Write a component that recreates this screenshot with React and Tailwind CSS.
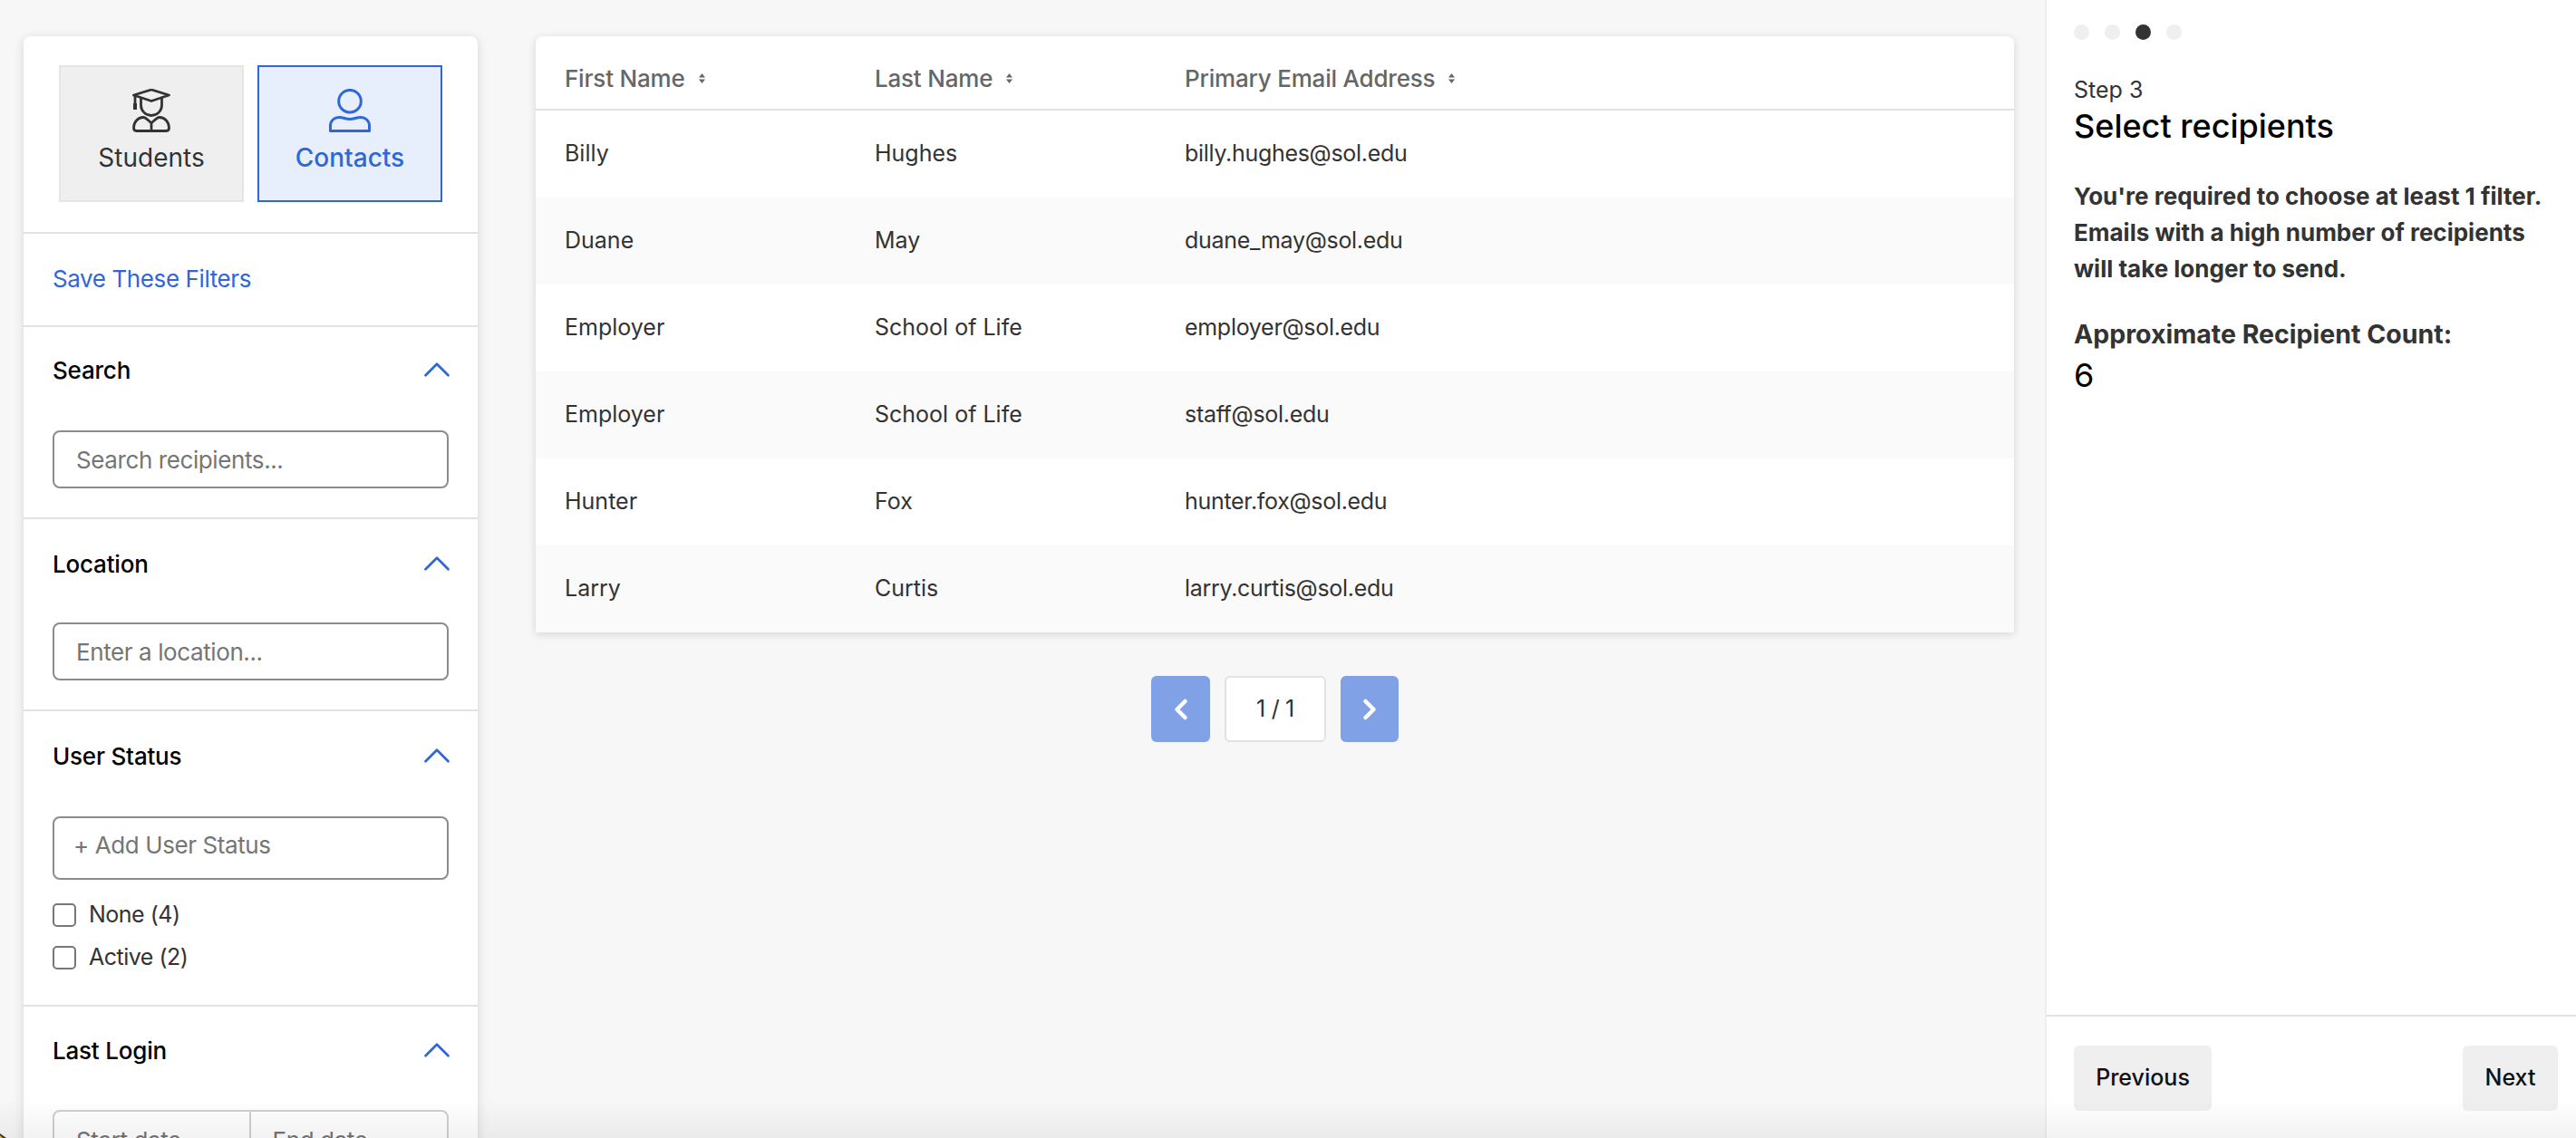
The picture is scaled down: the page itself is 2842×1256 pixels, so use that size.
import React from 'react';
import { ChevronUp, ChevronLeft, ChevronRight } from 'lucide-react';

const rows = [
    ['Billy', 'Hughes', 'billy.hughes@sol.edu'],
    ['Duane', 'May', 'duane_may@sol.edu'],
    ['Employer', 'School of Life', 'employer@sol.edu'],
    ['Employer', 'School of Life', 'staff@sol.edu'],
    ['Hunter', 'Fox', 'hunter.fox@sol.edu'],
    ['Larry', 'Curtis', 'larry.curtis@sol.edu'],
];

const StudentIcon = () => (
    <svg width="42" height="48" viewBox="0 0 42 48" fill="none" stroke="#333" strokeWidth="2.8" strokeLinejoin="round" strokeLinecap="round">
        <path d="M1.5 7 21 1l19.5 6L21 13.5z" />
        <path d="M9.5 11v7a11.5 11.5 0 0 0 23 0v-7" />
        <path d="M3 8v8" />
        <path d="M3 16v7" strokeWidth="4" strokeLinecap="butt" />
        <path d="M21 38c-4-3.5-6-6.5-9-6.5-6 0-10.5 5.500-10.500 11.500 0 2.500 1 3.500 3 3.500h33c2 0 3-1 3-3.500 0-6-4.500-11.500-10.500-11.500-3 0-5 3-9 6.500v8.500" />
    </svg>
);

const ContactIcon = () => (
    <svg width="48" height="48" viewBox="0 0 48 48" fill="none" stroke="#2f66d9" strokeWidth="3" strokeLinejoin="round">
        <circle cx="24" cy="13.7" r="12.300" />
        <path d="M2.500 46.500h43V41c0-6-4.500-9.500-9.500-9.500-5 0-7 2-12 2s-7-2-12-2c-5 0-9.500 3.500-9.500 9.500z" />
    </svg>
);

const SortIcon = () => (
    <svg width="7" height="11" viewBox="0 0 7 11" fill="#666" className="ml-[15px]">
        <path d="M3.500 0 7 4.500H0z" />
        <path d="M3.500 11 0 6.500h7z" />
    </svg>
);

// padding en marge verschillen per sectie, dus die komen als classes binnen
const FilterSection = ({ title, topClass = 'pt-[32px]', bodyClass = 'mt-[48px]', padClass = 'pb-[32px]', children }) => (
    <section className={`border-t-2 border-[#e2e2e2] px-8 ${topClass} ${padClass}`}>
        <div className="flex items-center justify-between h-[34px]">
            <h3 className="text-[26px] tracking-[-0.2px] font-medium text-black">{title}</h3>
            <ChevronUp size={50} strokeWidth={1.300} className="text-[#2f66d9] -mr-[12px] shrink-0" />
        </div>
        <div className={bodyClass}>{children}</div>
    </section>
);

const TextInput = ({ placeholder }) => (
    <input
        placeholder={placeholder}
        className="w-full h-[64px] rounded-lg border-2 border-[#8c8c8c] px-6 text-[26px] tracking-[-0.4px] text-[#333] placeholder:text-[#757575] outline-none bg-white"
    />
);

const Check = ({ label }) => (
    <label className="flex items-center h-[26px] text-[25px] tracking-[-0.5px] text-[#333]">
        <span className="w-[26px] h-[26px] rounded-[5px] border-2 border-[#777] bg-white mr-[14px]" />
        {label}
    </label>
);

const Sidebar = () => (
    <aside className="w-[501px] ml-[26px] mt-10 bg-white rounded-t-lg shadow-[0_2px_12px_rgba(0,0,0,0.14)] shrink-0 self-start">
        <div className="flex gap-[15px] px-[39px] pt-8 pb-[33px]">
            <button className="w-[204px] h-[151px] border-2 border-[#e5e5e5] bg-[#efefef] text-[#333] flex flex-col items-center pt-[24px]">
                <StudentIcon />
                <span className="text-[28px] leading-[36px] mt-[10px]">Students</span>
            </button>
            <button className="w-[204px] h-[151px] border-2 border-[#2f66d9] bg-[#e8effc] text-[#2f66d9] flex flex-col items-center pt-[24px]">
                <ContactIcon />
                <span className="text-[28px] leading-[36px] mt-[10px] font-medium">Contacts</span>
            </button>
        </div>
        <div className="border-t-2 border-[#e2e2e2] h-[103px] px-8 pb-[3px] flex items-center">
            <a className="text-[26px] tracking-[-0.4px] text-[#2f66d9]">Save These Filters</a>
        </div>
        <FilterSection title="Search" topClass="pt-[30px]" bodyClass="mt-[50px]">
            <TextInput placeholder="Search recipients..." />
        </FilterSection>
        <FilterSection title="Location">
            <TextInput placeholder="Enter a location..." />
        </FilterSection>
        <FilterSection title="User Status" bodyClass="mt-[50px]" padClass="pb-[39px]">
            <div className="h-[70px] rounded-lg border-2 border-[#8c8c8c] px-[21px] pt-[10px] text-[26px] tracking-[-0.4px] text-[#757575]">+ Add User Status</div>
            <div className="mt-[26px] flex flex-col gap-[21px]">
                <Check label="None (4)" />
                <Check label="Active (2)" />
            </div>
        </FilterSection>
        <FilterSection title="Last Login" topClass="pt-[31px]" bodyClass="mt-[49px]">
            <div className="flex h-[64px] rounded-lg border-2 border-[#cfcfcf] text-[26px] tracking-[-0.4px] text-[#757575]">
                <div className="w-1/2 border-r-2 border-[#cfcfcf] px-6 pt-3">Start date</div>
                <div className="w-1/2 px-6 pt-3">End date</div>
            </div>
        </FilterSection>
    </aside>
);

const RecipientTable = () => (
    <div className="bg-white rounded-t-lg shadow-[0_2px_10px_rgba(0,0,0,0.14)]">
        <table className="w-full table-fixed border-separate border-spacing-0 text-[25px]">
            <colgroup>
                <col className="w-[342px]" />
                <col className="w-[342px]" />
                <col />
            </colgroup>
            <thead>
                <tr className="h-[82px] text-left text-[#666]">
                    {['First Name', 'Last Name', 'Primary Email Address'].map((h) => (
                        <th key={h} className="pl-8 pt-[13px] border-b-2 border-[#e2e2e2] font-medium text-[26px] tracking-[-0.2px]">
                            <span className="flex items-center">{h}<SortIcon /></span>
                        </th>
                    ))}
                </tr>
            </thead>
            <tbody>
                {rows.map((r, i) => (
                    <tr key={i} className={`h-[96px] text-[#333] ${i % 2 === 1 ? 'bg-[#fafafa]' : 'bg-white'}`}>
                        <td className="pl-8">{r[0]}</td>
                        <td className="pl-8">{r[1]}</td>
                        <td className="pl-8 tracking-[-0.3px]">{r[2]}</td>
                    </tr>
                ))}
            </tbody>
        </table>
    </div>
);

const Pagination = () => (
    <div className="flex justify-center items-stretch mt-[48px] h-[73px]">
        <button className="w-[65px] rounded-md bg-[#81a1e6] text-white flex items-center justify-center">
            <ChevronLeft size={36} strokeWidth={3} />
        </button>
        <div className="w-[112px] mx-4 rounded-md border-2 border-[#e2e2e2] bg-white flex items-center justify-center text-[25px] tracking-[-0.3px] text-[#333]">1 / 1</div>
        <button className="w-[64px] rounded-md bg-[#81a1e6] text-white flex items-center justify-center">
            <ChevronRight size={36} strokeWidth={3} />
        </button>
    </div>
);

const StepPanel = () => (
    <aside className="w-[586px] h-screen shrink-0 ml-[34px] bg-white border-l-2 border-[#eeeeee] flex flex-col">
        <div className="flex-1 pl-[30px] pr-4 pt-[27px]">
            <div className="flex gap-[17px]">
                <span className="w-[17px] h-[17px] rounded-full bg-[#efefef]" />
                <span className="w-[17px] h-[17px] rounded-full bg-[#efefef]" />
                <span className="w-[17px] h-[17px] rounded-full bg-[#333]" />
                <span className="w-[17px] h-[17px] rounded-full bg-[#efefef]" />
            </div>
            <div className="mt-[37px] text-[25px] leading-[36px] text-[#333]">Step 3</div>
            <h2 className="text-[36px] leading-[44px] font-medium text-black">Select recipients</h2>
            <p className="mt-[36px] text-[26px] leading-[40px] font-bold text-[#333]">
                You're required to choose at least 1 filter. Emails with a high number of recipients will take longer to send.
            </p>
            <div className="mt-[33px] text-[28.500px] leading-[38px] font-bold text-[#333]">Approximate Recipient Count:</div>
            <div className="text-[36px] leading-[46px] mt-[3px] text-black">6</div>
        </div>
        <div className="border-t-2 border-[#e2e2e2] h-[136px] pl-[30px] pr-[20px] pt-[32px] flex justify-between items-start">
            <button className="w-[152px] h-[72px] rounded-md bg-[#efefef] text-[25px] font-medium text-[#111]">Previous</button>
            <button className="w-[105px] h-[72px] rounded-md bg-[#efefef] text-[25px] font-medium text-[#111]">Next</button>
        </div>
    </aside>
);

export default function App() {
    return (
        <div className="relative flex h-screen overflow-hidden bg-[#f7f7f7] font-['Inter',sans-serif]">
            <Sidebar />
            <main className="w-[1631px] ml-[64px] pt-10 shrink-0">
                <RecipientTable />
                <Pagination />
            </main>
            <StepPanel />
            <div className="absolute bottom-0 inset-x-0 h-[44px] pointer-events-none bg-linear-to-b from-transparent to-black/5" />
            {/* klein stukje cursor linksonder in de hoek */}
            <svg width="7" height="5" viewBox="0 0 7 5" className="absolute left-0 bottom-0">
                <path d="M0 0 7 5H0z" fill="#3a3520" />
                <path d="M0 2 3 5H0z" fill="#d9b64a" />
            </svg>
        </div>
    );
}
